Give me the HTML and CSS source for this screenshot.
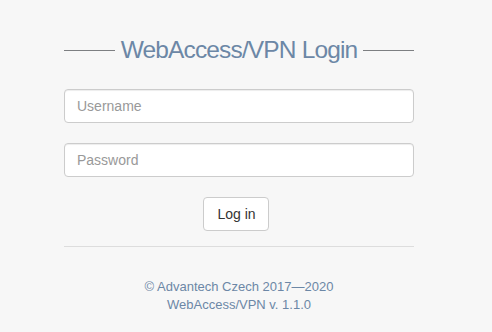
FILE: index.html
```html
<!DOCTYPE html>
<html>
<head>
<meta charset="utf-8">
<link rel="stylesheet" href="styles.css">
</head>
<body>
<div class="page">
  <div class="login">
    <div class="title">
      <span class="rule"></span>
      <h1>WebAccess/VPN Login</h1>
      <span class="rule"></span>
    </div>
    <form class="form">
      <input class="field" type="text" placeholder="Username">
      <input class="field" type="password" placeholder="Password">
      <div class="actions"><button class="btn" type="button">Log in</button></div>
    </form>
    <hr class="sep">
    <div class="footer">
      <div>© Advantech Czech 2017—2020</div>
      <div>WebAccess/VPN v. 1.1.0</div>
    </div>
  </div>
</div>
</body>
</html>
```
FILE: styles.css
```css
html, body {
  margin: 0;
  padding: 0;
  background: #f7f7f7;
  font-family: "Liberation Sans", Arial, sans-serif;
}
.page {
  padding: 34px 0 0 64px;
}
.login {
  width: 350px;
}
.title {
  display: flex;
  align-items: center;
  gap: 6px;
}
.rule {
  flex: 1;
  height: 1px;
  background: #7d7f82;
}
.title h1 {
  margin: 0;
  font-weight: normal;
  font-size: 24.5px;
  letter-spacing: -0.85px;
  line-height: 32px;
  color: #6c87a6;
}
.form {
  margin-top: 23px;
  display: flex;
  flex-direction: column;
  gap: 20px;
}
.field {
  box-sizing: border-box;
  width: 350px;
  height: 34px;
  padding: 6px 12px;
  font-family: "Liberation Sans", Arial, sans-serif;
  font-size: 14px;
  color: #555;
  background: #fff;
  border: 1px solid #ccc;
  border-radius: 4px;
  box-shadow: inset 0 1px 1px rgba(0,0,0,0.075);
  outline: none;
}
.field::placeholder {
  color: #999;
}
.actions {
  display: flex;
  justify-content: center;
  padding-right: 6px;
}
.btn {
  box-sizing: border-box;
  height: 34px;
  padding: 6px 12px 6px 13px;
  font-family: "Liberation Sans", Arial, sans-serif;
  font-size: 14px;
  color: #333;
  background: #fff;
  border: 1px solid #ccc;
  border-radius: 4px;
}
.sep {
  margin: 15px 0 0;
  border: 0;
  border-top: 1px solid #ddd;
}
.footer {
  margin-top: 31px;
  text-align: center;
  font-size: 13px;
  line-height: 18px;
  color: #6c87a6;
}
```
